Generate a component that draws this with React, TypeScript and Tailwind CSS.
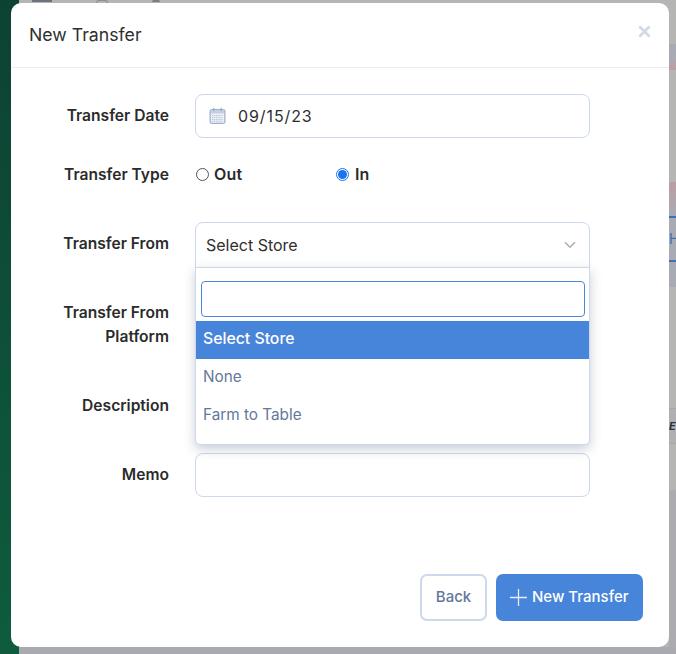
import { X } from 'lucide-react';

const font = 'font-["Inter","Noto_Sans",sans-serif]';

const CalendarIcon = () => (
  <svg width="18" height="18" viewBox="0 0 18 18" fill="none">
    <rect x="1" y="2.5" width="15" height="14" rx="1.5" fill="#c3d0e2" stroke="#9fb1c9" />
    <rect x="2" y="6.5" width="13" height="9" fill="#eef2f7" />
    <rect x="4" y="0.8" width="1.6" height="3.4" rx="0.8" fill="#9fb1c9" />
    <rect x="11.4" y="0.8" width="1.6" height="3.4" rx="0.8" fill="#9fb1c9" />
    <path d="M3 8.5h11M3 10.5h11M3 12.5h11M3 14.2h11" stroke="#9fb1c9" strokeWidth="0.8" strokeDasharray="1.2 0.9" />
  </svg>
);

// page behind the modal, only the edges show
const Backdrop = () => (
  <div className="flex h-full w-full">
    <div className="h-full w-[19px] bg-gradient-to-b from-[#0d4233] to-[#0e5c3d]" />
    <div className="flex h-full flex-1 flex-col bg-[#b5b5b4]">
      <div className="flex h-[3px] items-start gap-[44px] pl-[13px]">
        <div className="h-[2px] w-[20px] bg-[#6c7280]" />
        <div className="h-[3px] w-[12px] rounded-t-full border border-b-0 border-[#8b8f98]" />
        <div className="h-[2px] w-[8px] rounded-t-full bg-[#777b85]" />
      </div>
      <div className="ml-auto mt-[41px] h-[26px] w-[7px] bg-gradient-to-b from-[#a9abb4] via-[#a9abb4] to-[#bb9ea2]" />
      <div className="ml-auto mt-[112px] h-[105px] w-[7px] bg-gradient-to-b from-[#bb9ea2] via-[#a9abb4] via-30% to-[#a9abb4]">
        <div className="mt-[34px] flex h-[46px] items-center overflow-hidden border-y-2 border-[#3f6fb8] text-[14px] leading-none text-[#3f6fb8]">
          H
        </div>
      </div>
      <div className="ml-auto mt-[121px] flex h-[36px] w-[7px] items-center overflow-hidden border-y border-[#a8a8a8] bg-[#b0b0b2] text-[11px] font-bold italic text-[#2f3136]">
        E
      </div>
      <div className="ml-auto mt-[46px] flex-1 w-[7px] bg-[#ababb0]" />
      <div className="h-[7px] bg-[#a9aab0]" />
    </div>
  </div>
);

const Label = ({ children, className = '' }: { children: React.ReactNode; className?: string }) => (
  <div className={`w-[158px] shrink-0 text-right text-[15.6px] font-semibold leading-[24px] text-[#2b2b2b] ${className}`}>
    {children}
  </div>
);

const inputClass = 'h-[44px] w-[395px] rounded-[8px] border border-[#cbd9ea] bg-white';

export default function App() {
  return (
    <div className={`relative h-[654px] w-[676px] overflow-hidden ${font}`}>
      <Backdrop />

      <div className="absolute left-[11px] top-[3px] flex h-[644px] w-[658px] flex-col rounded-[10px] bg-white">
        <div className="flex h-[65px] items-center justify-between border-b border-[#e8edf3] pl-[18px] pr-[16px]">
          <h2 className="text-[17.7px] font-normal text-[#2f2f2f]">New Transfer</h2>
          <X size={17} strokeWidth={4} className="mb-[7px] text-[#d3dae3]" />
        </div>

        <div className="relative flex flex-1 flex-col pt-[26px]">
          <div className="flex items-center gap-[26px]">
            <Label>Transfer Date</Label>
            <div className={`${inputClass} flex items-center gap-[11px] pl-[13px]`}>
              <CalendarIcon />
              <span className="text-[16px] tracking-[0.9px] text-[#2f2f2f]">09/15/23</span>
            </div>
          </div>

          <div className="mt-[24px] flex h-[24px] items-center gap-[26px] pt-[2px]">
            <Label>Transfer Type</Label>
            <div className="flex items-center pb-[2px] text-[16px] font-semibold text-[#2b2b2b]">
              <span className="ml-[1px] h-[13px] w-[13px] rounded-full border border-[#555] bg-white" />
              <span className="ml-[5px] w-[122px] tracking-[0.2px]">Out</span>
              <span className="flex h-[13px] w-[13px] items-center justify-center rounded-full border border-[#1a73f0] bg-white">
                <span className="h-[9px] w-[9px] rounded-full bg-[#1a73f0]" />
              </span>
              <span className="ml-[6px]">In</span>
            </div>
          </div>

          <div className="mt-[36px] flex items-center gap-[26px]">
            <Label className="pb-[2px]">Transfer From</Label>
            <div className="relative z-10 w-[395px]">
              <div className="flex h-[46px] items-center justify-between rounded-t-[8px] border border-[#cbd9ea] bg-white pb-[1px] pl-[10px] pr-[13px]">
                <span className="text-[16px] text-[#2f2f2f]">Select Store</span>
                <svg width="12" height="8" viewBox="0 0 12 8" fill="none">
                  <path d="M1 1.2 6 6.2 11 1.2" stroke="#aeaeae" strokeWidth="1.6" />
                </svg>
              </div>
              <div className="absolute left-0 top-[45px] h-[178px] w-full rounded-b-[5px] border border-[#cbd9ea] bg-white shadow-[0_4px_12px_rgba(70,90,120,0.3)]">
                <div className="pl-[5px] pr-[4px] pt-[13px]">
                  <div className="h-[36px] rounded-[4px] border border-[#4a85d9] bg-white" />
                </div>
                <div className="mt-[4px] flex h-[38px] items-center bg-[#4785da] pb-[2px] pl-[7px] text-[15.8px] font-medium text-white">
                  Select Store
                </div>
                <div className="flex h-[38px] items-center pb-[2px] pl-[7px] text-[15.3px] text-[#63779a]">None</div>
                <div className="flex h-[38px] items-center pb-[2px] pl-[7px] text-[15.3px] text-[#63779a]">Farm to Table</div>
              </div>
            </div>
          </div>

          <div className="mt-[33px] flex items-start gap-[26px]">
            <Label>
              Transfer From
              <br />
              Platform
            </Label>
          </div>

          <div className="mt-[45px] flex items-start gap-[26px]">
            <Label>Description</Label>
          </div>

          <div className="mt-[35px] flex items-center gap-[26px]">
            <Label>Memo</Label>
            <div className={inputClass} />
          </div>

          <div className="mt-[77px] flex justify-end gap-[9px] pr-[26px]">
            <button className="h-[47px] w-[67px] rounded-[7px] border-2 border-[#cbd9ea] bg-white text-[15px] font-medium text-[#63779a]">
              Back
            </button>
            <button className="flex h-[47px] w-[147px] items-center gap-[5px] rounded-[7px] bg-[#4785da] pl-[14px] text-[15px] font-medium text-white">
              <svg width="17" height="17" viewBox="0 0 17 17" fill="none">
                <path d="M8.5 0v17M0 8.5h17" stroke="#e8eff9" strokeWidth="1.3" />
              </svg>
              New Transfer
            </button>
          </div>
        </div>
      </div>
    </div>
  );
}
